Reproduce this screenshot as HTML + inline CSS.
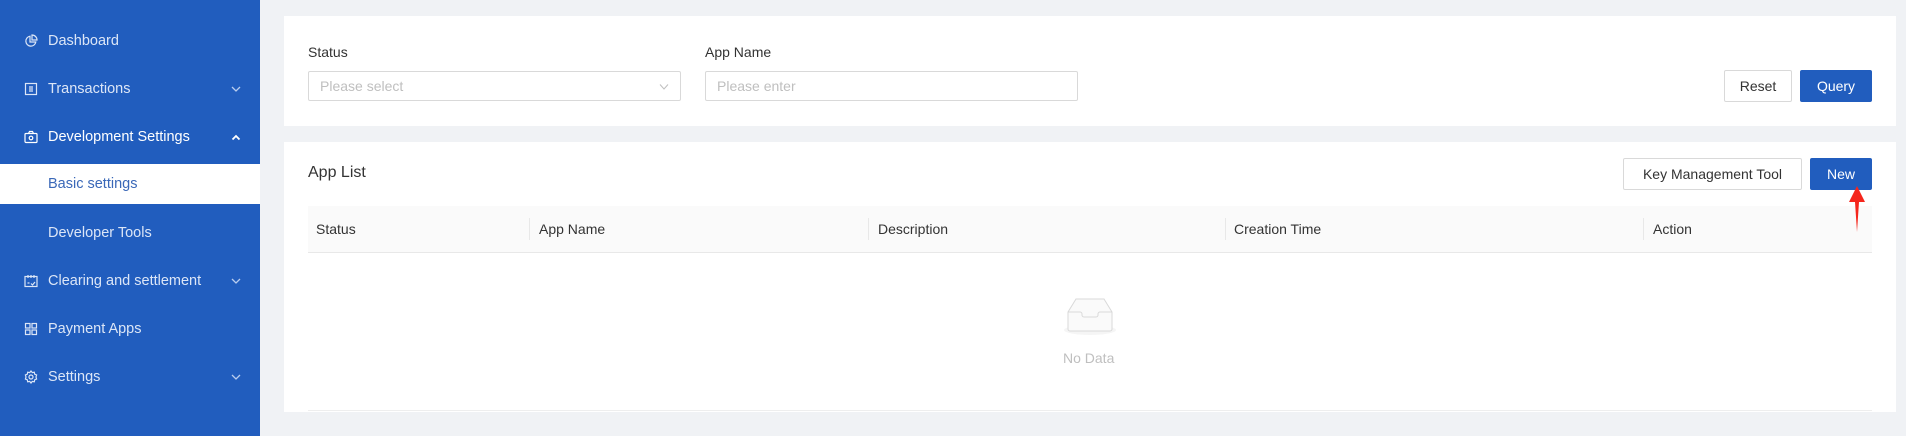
<!DOCTYPE html>
<html><head><meta charset="utf-8"><style>
*{margin:0;padding:0;box-sizing:border-box}
body{width:1906px;height:436px;background:#f0f2f5;font-family:"Liberation Sans",sans-serif;position:relative;overflow:hidden;font-size:14px;color:#333}
.a{position:absolute}
#sb{left:0;top:0;width:260px;height:436px;background:#215dbe}
.mi{position:absolute;left:0;width:260px;height:40px;line-height:40px;color:#dce6f7;font-size:14.5px}
.mi .t{position:absolute;left:48px}
.mi svg{position:absolute;left:24px;top:13px}
.card{background:#fff}
.lbl{font-size:14px;color:#333}
.inp{border:1px solid #d9d9d9;border-radius:2px;background:#fff;color:#bfbfbf;font-size:14px;line-height:28px;padding-left:11px}
.btn{border-radius:2px;text-align:center;line-height:30px;font-size:14px}
.th{top:206px;height:47px;line-height:47px;font-size:14px;color:#333}
.dv{top:218px;width:1px;height:22px;background:#e8e8e8}
</style></head><body>
<div id="sb" class="a">
 <div class="mi" style="top:21px"><svg width="14" height="14" viewBox="0 0 14 14" fill="none" stroke="#dce6f7" stroke-width="1.2"><path d="M6 2.2A5 5 0 1 0 11.8 8H6z"/><path d="M8 1v5h5A5 5 0 0 0 8 1z"/></svg><span class="t">Dashboard</span></div>
 <div class="mi" style="top:69px"><svg width="14" height="14" viewBox="0 0 14 14" fill="none" stroke="#dce6f7" stroke-width="1.2"><rect x="1.5" y="1.5" width="11" height="11"/><path d="M5 5h4M5 7h4M5 9h4"/></svg><span class="t">Transactions</span><svg width="10" height="7" viewBox="0 0 10 7" fill="none" stroke="#b9cdee" stroke-width="1.3" style="left:231px;top:17px"><path d="M1 1l4 4 4-4"/></svg></div>
 <div class="mi" style="top:117px;color:#fff"><svg width="14" height="14" viewBox="0 0 14 14" fill="none" stroke="#fff" stroke-width="1.2"><rect x="1" y="3.5" width="12" height="9" rx="1"/><path d="M4.5 3.5l1-2h3l1 2"/><circle cx="7" cy="8" r="1.8"/></svg><span class="t">Development Settings</span><svg width="10" height="7" viewBox="0 0 10 7" fill="none" stroke="#fff" stroke-width="1.8" style="left:231px;top:17px"><path d="M1.5 5.5L5 2l3.5 3.5"/></svg></div>
 <div class="mi" style="top:164px;background:#fff;color:#3a68b8"><span class="t">Basic settings</span></div>
 <div class="mi" style="top:213px"><span class="t">Developer Tools</span></div>
 <div class="mi" style="top:261px"><svg width="14" height="14" viewBox="0 0 14 14" fill="none" stroke="#dce6f7" stroke-width="1.2"><rect x="1" y="2.5" width="12" height="10"/><path d="M4 1v3M7 1v3M10 1v3M3.5 9h2M7 9.5l1.5 1.5 2.5-3"/></svg><span class="t">Clearing and settlement</span><svg width="10" height="7" viewBox="0 0 10 7" fill="none" stroke="#b9cdee" stroke-width="1.3" style="left:231px;top:17px"><path d="M1 1l4 4 4-4"/></svg></div>
 <div class="mi" style="top:309px"><svg width="14" height="14" viewBox="0 0 14 14" fill="none" stroke="#dce6f7" stroke-width="1.2"><rect x="1.5" y="1.5" width="4.5" height="4.5"/><rect x="8" y="1.5" width="4.5" height="4.5"/><rect x="1.5" y="8" width="4.5" height="4.5"/><rect x="8" y="8" width="4.5" height="4.5"/></svg><span class="t">Payment Apps</span></div>
 <div class="mi" style="top:357px"><svg width="14" height="14" viewBox="0 0 14 14" fill="none" stroke="#dce6f7" stroke-width="1.2"><path d="M7 1l1.3 1.6 2-.4.4 2L12.6 5 12 7l.6 2-1.9.8-.4 2-2-.4L7 13l-1.3-1.6-2 .4-.4-2L1.4 9 2 7l-.6-2 1.9-.8.4-2 2 .4z"/><circle cx="7" cy="7" r="2"/></svg><span class="t">Settings</span><svg width="10" height="7" viewBox="0 0 10 7" fill="none" stroke="#b9cdee" stroke-width="1.3" style="left:231px;top:17px"><path d="M1 1l4 4 4-4"/></svg></div>
</div>

<div class="a card" style="left:284px;top:16px;width:1612px;height:110px"></div>
<div class="a lbl" style="left:308px;top:44px">Status</div>
<div class="a lbl" style="left:705px;top:44px">App Name</div>
<div class="a inp" style="left:308px;top:71px;width:373px;height:30px">Please select<svg width="10" height="6" viewBox="0 0 10 6" fill="none" stroke="#bfbfbf" stroke-width="1" style="position:absolute;right:11px;top:12px"><path d="M1 .5l4 4.5 4-4.5"/></svg></div>
<div class="a inp" style="left:705px;top:71px;width:373px;height:30px">Please enter</div>
<div class="a btn" style="left:1724px;top:70px;width:68px;height:32px;border:1px solid #d9d9d9;color:#333;background:#fff">Reset</div>
<div class="a btn" style="left:1800px;top:70px;width:72px;height:32px;background:#215dbe;color:#fff;line-height:32px">Query</div>

<div class="a card" style="left:284px;top:142px;width:1612px;height:270px"></div>
<div class="a" style="left:308px;top:164px;font-size:16px;color:#333">App List</div>
<div class="a btn" style="left:1623px;top:158px;width:179px;height:32px;border:1px solid #d9d9d9;color:#333;background:#fff">Key Management Tool</div>
<div class="a btn" style="left:1810px;top:158px;width:62px;height:32px;background:#215dbe;color:#fff;line-height:32px">New</div>

<div class="a" style="left:308px;top:206px;width:1564px;height:47px;background:#fafafa;border-bottom:1px solid #e8e8e8"></div>
<div class="a th" style="left:316px">Status</div>
<div class="a dv" style="left:529px"></div>
<div class="a th" style="left:539px">App Name</div>
<div class="a dv" style="left:868px"></div>
<div class="a th" style="left:878px">Description</div>
<div class="a dv" style="left:1225px"></div>
<div class="a th" style="left:1234px">Creation Time</div>
<div class="a dv" style="left:1643px"></div>
<div class="a th" style="left:1653px">Action</div>
<div class="a" style="left:308px;top:410px;width:1564px;height:1px;background:#eee"></div>

<svg class="a" style="left:1058px;top:294px" width="64" height="44" viewBox="0 0 64 44" fill="none">
<ellipse cx="32" cy="36" rx="26" ry="5" fill="#f5f5f5"/>
<path d="M10 18L18 5h28l8 13v17a2 2 0 0 1-2 2H12a2 2 0 0 1-2-2z" fill="#fafafa" stroke="#d9d9d9"/>
<path d="M10 18h12a2 2 0 0 1 2 2v1a2 2 0 0 0 2 2h12a2 2 0 0 0 2-2v-1a2 2 0 0 1 2-2h12" stroke="#d9d9d9"/>
</svg>
<div class="a" style="left:1063px;top:350px;color:#bfbfbf;font-size:14px">No Data</div>

<svg class="a" style="left:1846px;top:185px" width="22" height="48" viewBox="0 0 22 48"><path d="M11 1L3 17h6l2 30 2-30h6z" fill="#f5261c"/></svg>
</body></html>
